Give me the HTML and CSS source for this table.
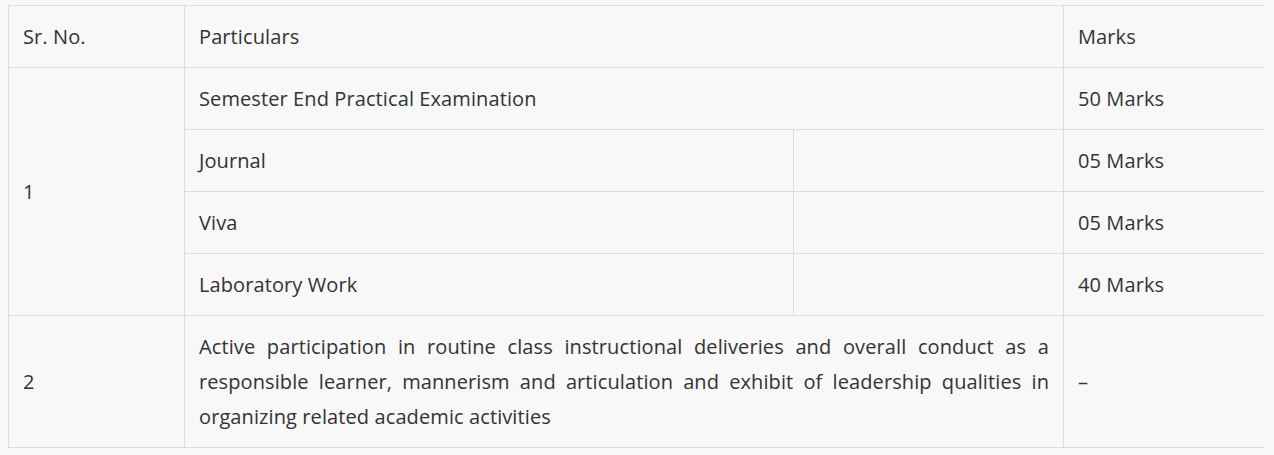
FILE: index.html
```html
<!DOCTYPE html>
<html>
<head>
<meta charset="utf-8">
<link rel="stylesheet" href="styles.css">
</head>
<body>
<table class="marks-table">
  <colgroup>
    <col class="c1"><col class="c2"><col class="c3"><col class="c4">
  </colgroup>
  <tr>
    <td>Sr. No.</td>
    <td colspan="2">Particulars</td>
    <td>Marks</td>
  </tr>
  <tr>
    <td rowspan="4">1</td>
    <td colspan="2">Semester End Practical Examination</td>
    <td>50 Marks</td>
  </tr>
  <tr>
    <td>Journal</td>
    <td></td>
    <td>05 Marks</td>
  </tr>
  <tr>
    <td>Viva</td>
    <td></td>
    <td>05 Marks</td>
  </tr>
  <tr>
    <td>Laboratory Work</td>
    <td></td>
    <td>40 Marks</td>
  </tr>
  <tr>
    <td>2</td>
    <td colspan="2" class="just">Active participation in routine class instructional deliveries and overall conduct as a responsible learner, mannerism and articulation and exhibit of leadership qualities in organizing related academic activities</td>
    <td>–</td>
  </tr>
</table>
</body>
</html>
```
FILE: styles.css
```css
html, body {
  background: #f8f8f8;
}
body {
  margin: 5px 10px 0 8px;
  font-family: "Open Sans", sans-serif;
  font-size: 20px;
  letter-spacing: 0.1px;
  color: #333;
}
.marks-table {
  width: 1256px;
  border-collapse: collapse;
  table-layout: fixed;
}
.c1 { width: 176px; }
.c2 { width: 609px; }
.c3 { width: 270px; }
.c4 { width: 201px; }
.marks-table td {
  border: 1px solid #ddd;
  padding: 13px 14px;
  line-height: 35px;
  vertical-align: middle;
  text-align: left;
}
.marks-table td.just {
  text-align: justify;
}
```
